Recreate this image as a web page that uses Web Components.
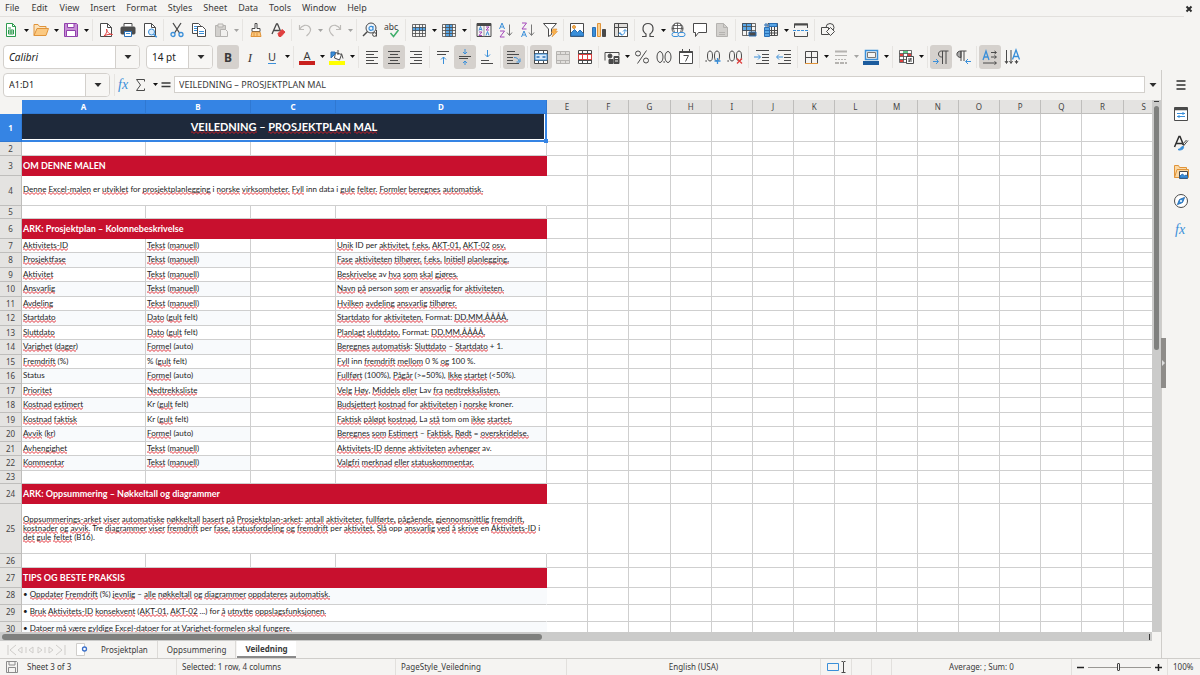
<!DOCTYPE html>
<html lang="nb">
<head>
<meta charset="utf-8">
<title>Prosjektplan – Veiledning</title>
<style>
  html, body { margin: 0; height: 100%; }
  body { background: #f5f4f2; color: #3a3a3a; font: 9px/12px "Noto Sans", sans-serif; overflow: hidden; }
</style>
</head>
<body>
<calc-window></calc-window>

<script>
const svg = (body, w = 16, h = 16) =>
  `<svg width="${w}" height="${h}" viewBox="0 0 ${w} ${h}" fill="none" stroke="#4a4a4a" aria-hidden="true">${body}</svg>`;

const gridLines = '<path d="M1.500 2.500h13v12h-13zM1.500 5.500h13M1.500 8.500h13M1.500 11.500h13M4.500 2.500v12M8.500 2.500v12M11.500 2.500v12" stroke-width=".8"/>';
const lines = (ys, x1 = 2, x2 = 14) => ys.map(y => `M${x1} ${y}h${x2 - x1}`).join('');

const ICONS = {
  newdoc: '<path d="M3.500 1.500h6l3 3v10h-9z" stroke="#2e9b4f" fill="#fff"/><path d="M5.500 8h5v4h-5zM5.500 10h5M8 8v4M5 6h3" stroke="#2e9b4f"/><path d="M9.500 1.500v3h3" stroke="#2e9b4f"/>',
  open: '<path d="M1 13.500v-11h4l1.500 2H13v2" stroke="#e0943a" fill="#fbe3bd"/><path d="M1 13.500l3-7h11.500l-2.500 7z" stroke="#e0943a" fill="#fbc981"/>',
  save: '<path d="M1.500 1.500h12l1 1v12h-13z" stroke="#9141ac" fill="#c88fd6"/><path d="M4.500 1.500h6.500v4h-6.500z" stroke="#9141ac" fill="#fff"/><path d="M3.500 8.500h9v6h-9z" stroke="#9141ac" fill="#fff"/>',
  pdf: '<path d="M2.500 1.500h7l4 4v9h-11z" fill="#fff"/><path d="M9.500 1.500v4h4"/><path d="M6 14c3-3 3-5 2.500-7 1 4 3 5 6 5.500-3-.5-6 0-8.500 1.500z" stroke="#e0403f"/>',
  print: '<path d="M4 4.500v-3h8v3" fill="#fff"/><rect x="1" y="5" width="14" height="7" rx="1" fill="#4d4d4d"/><path d="M4.500 9.500h7v5h-7z" fill="#fff" stroke="#2a6fb5"/><path d="M6 11.500h4" stroke="#3a8fd9"/>',
  preview: '<path d="M2.500 1.500h7l4 4v9h-11z" fill="#fff"/><path d="M9.500 1.500v4h4"/><circle cx="9.500" cy="10" r="3" stroke="#3a8fd9" fill="#dcecfa"/><path d="M11.700 12.200l3 3" stroke="#3a8fd9" stroke-width="1.500"/>',
  cut: '<path d="M4 1l6.500 10M12 1L5.500 11" stroke-width="1.300"/><circle cx="4" cy="12.500" r="2" stroke="#3a8fd9" stroke-width="1.300"/><circle cx="12" cy="12.500" r="2" stroke="#3a8fd9" stroke-width="1.300"/>',
  copy: '<path d="M1.500 1.500h6l2 2v8h-8z" fill="#fff"/><path d="M3 4.500h4M3 6.500h3M3 8.500h3" stroke="#3a8fd9"/><path d="M6.500 4.500h5l3 3v7h-8z" fill="#fff"/><path d="M8 9.500h5M8 11.500h5" stroke="#3a8fd9"/>',
  paste: '<path d="M2.500 3.500h10v11h-10z" stroke="#b5b3b0" fill="#d2d0cd"/><path d="M5 2h5v3H5z" stroke="#b5b3b0" fill="#e8e6e3"/><path d="M7.500 7.500h5l2 2v5h-7z" stroke="#b5b3b0" fill="#f1f0ee"/>',
  brush: '<path d="M7 1.500h2v5h3v3H4v-3h3z" fill="#fff"/><path d="M4 10h8l1 4.500H3z" stroke="#e0943a" fill="#fbc981"/><path d="M6 11v3M9 11v3" stroke="#e0943a"/>',
  clear: '<path d="M2 12L6.500 2h1L10.500 9M3.500 8.500h6" stroke-width="1.300"/><path d="M8 11.500l4-4 3 2.500-4 4.500H9z" fill="#e0403f" stroke="#e0403f"/>',
  undo: '<path d="M2.500 3v4.500H7M2.500 7.500C5 3 10 2 12.500 5s.5 6-3 9" stroke="#bdbbb8" stroke-width="1.200"/>',
  redo: '<path d="M13.500 3v4.500H9M13.500 7.500C11 3 6 2 3.500 5s-.5 6 3 9" stroke="#bdbbb8" stroke-width="1.200"/>',
  find: '<circle cx="9" cy="6" r="5" fill="#eef5fc"/><path d="M5.500 9.500L1 14" stroke-width="1.500"/><path d="M11 6.500a2 2 0 1 1-.1-.8M11 4v4.500" stroke="#3a8fd9" stroke-width="1.200"/><path d="M14.500 8v6.500"/><circle cx="12.500" cy="12.500" r="1.900"/>',
  spell: '<text x="0" y="8" font-family="Noto Sans" font-size="8.500" fill="#3a3a3a" stroke="none">abc</text><path d="M6.500 11l3 3.500 5-6.500" stroke="#3fae6a" stroke-width="1.500"/>',
  row: '<path d="M2 5h13v4H2z" fill="#58a6e6" stroke="none"/>' + gridLines,
  column: '<path d="M5 2h6v13H5z" fill="#58a6e6" stroke="none"/>' + gridLines,
  sort: '<path d="M1 1.500h14v13H1z"/><path d="M1 2h14v2H1z" fill="#4a4a4a" stroke="none"/><path d="M8 4v10.500" stroke="#999"/><path d="M3 8.500l1.500-4L6 8.500M3.300 7.500h2.400M10 13.500l1.500-4 1.500 4" stroke="#3a8fd9"/><path d="M3 10h3l-3 3.500h3M10 5h3l-3 3h3" stroke="#a347ba"/>',
  az: '<path d="M1.500 7L4 1l2.500 6M2.500 5h3" stroke="#3a8fd9"/><path d="M2 9h4.500L2 15h4.500" stroke="#a347ba"/><path d="M11.500 2.500V13M9 10.500l2.500 3 2.500-3" stroke="#777"/>',
  za: '<path d="M1.500 15L4 9l2.500 6M2.500 13h3" stroke="#3a8fd9"/><path d="M2 1h4.500L2 7h4.500" stroke="#a347ba"/><path d="M11.500 2.500V13M9 10.500l2.500 3 2.500-3" stroke="#777"/>',
  filter: '<path d="M1.500 1.500h13L9.500 7v5.500l-3 2V7z" fill="#fff"/><path d="M11 7h4l-1.500 2.500h2L10 15l1.500-4h-2z" fill="#fbb24c" stroke="#e0943a" stroke-width=".6"/>',
  image: '<path d="M1.500 1.500h13v13h-13z" fill="#fff"/><path d="M2 14v-3l3.500-3.500 3 3L11 8l3.500 3.500V14z" fill="#3a8fd9" stroke="#2a6fb5"/><circle cx="5" cy="5" r="1.500" fill="#fbb24c" stroke="#e0943a"/>',
  chart: '<path d="M1.500 5.500h3v9h-3z" fill="#3a8fd9" stroke="#2a6fb5"/><path d="M6.500 1.500h3v13h-3z" fill="#fbd08f" stroke="#e0943a"/><path d="M11.500 7.500h3v7h-3z" fill="#4a4a4a"/>',
  pivot: '<path d="M1.500 1.500h13v13h-13z" fill="#e0dedb"/><path d="M5.500 5.500h9v9h-9z" fill="#fff"/><path d="M1.500 5.500h4M5.500 1.500v4"/><path d="M7 11c0 3 5 3 5-3M10 9.500l2-2 2 2M9 13l-2-2.500-1.500 2" stroke="#3a8fd9"/>',
  omega: '<path d="M2 14.500h4V12C1.500 9 2 1.500 8 1.500S14.500 9 10 12v2.500h4" stroke-width="1.200"/>',
  link: '<circle cx="7.500" cy="6.500" r="5.500" fill="#fff"/><path d="M2 6.500h11M7.500 1v11M3 3.500h9M5 1.500c-2 3-2 6 0 9M10 1.500c2 3 2 6 0 9" stroke-width=".8"/><rect x="2" y="10.500" width="7" height="4" rx="2" stroke="#3a8fd9" fill="#f5f4f2"/><rect x="8" y="10.500" width="7" height="4" rx="2" stroke="#3a8fd9" fill="#f5f4f2"/>',
  comment: '<path d="M1.500 1.500h13v9h-8l-3 4v-4h-2z" fill="#fff"/>',
  header: '<path d="M2.500 1.500h7l4 4v9h-11z" fill="#d2d0cd" stroke="#b5b3b0"/><path d="M9.500 1.500v4h4M5 10.500h6M5 12.500h6" stroke="#b5b3b0"/>',
  printarea: '<path d="M1.500 1.500h9v7h-9z" fill="#58a6e6" stroke="#2a6fb5"/><path d="M1.500 1.500h13v12h-13zM1.500 4.500h13M1.500 8.500h13M5.500 1.500v12M10.500 1.500v12" stroke-width=".8"/><path d="M8 10h7v4H8z" fill="#4a4a4a" stroke="#2a6fb5"/>',
  freeze: '<path d="M5 1.500h9.500v12H5zM5 8.500h9.500M8.500 5v8.500M11.500 5v8.500M5 11h9.500"/><path d="M1.500 5.500h5v9h-5zM6 1.500h8v3H6z" fill="#58a6e6" stroke="#2a6fb5"/><path d="M1.500 8.500h5M1.500 11.500h5M3 1v4M1 3h4" stroke="#2a6fb5"/>',
  split: '<path d="M1.500 6V2h13v4M1.500 10v4.500h13V10"/><path d="M1 2.500h14" stroke-width="2"/><path d="M0 8.500h16" stroke="#3a8fd9" stroke-dasharray="3 1"/>',
  shapes: '<circle cx="10" cy="5.500" r="4" fill="#f5f4f2"/><path d="M1.500 5.500h7v7h-7z" fill="#f5f4f2"/><path d="M10.500 5.500l4 4-4 4-4-4z" fill="#f5f4f2"/>',
  bold: '<text x="8" y="12.500" text-anchor="middle" font-family="Noto Sans" font-weight="700" font-size="12" fill="#3a3a3a" stroke="none">B</text>',
  italic: '<text x="8" y="12.500" text-anchor="middle" font-family="Liberation Serif" font-style="italic" font-size="13" fill="#3a3a3a" stroke="none">I</text>',
  underline: '<text x="8" y="12" text-anchor="middle" font-family="Noto Sans" font-size="11" fill="#3a3a3a" stroke="none">U</text><path d="M4 14.500h8" stroke="#3a8fd9"/>',
  fontcolor: '<text x="8" y="10.500" text-anchor="middle" font-family="Noto Sans" font-size="11" fill="#3a3a3a" stroke="none">A</text><path d="M0 14h16" stroke="#c9211e" stroke-width="4"/>',
  highlight: '<path d="M0 14h16" stroke="#ff0" stroke-width="4"/><path d="M6.500 3.500l6 2-2 5.500-5-2z" fill="#fff"/><path d="M9 1v5M12.500 4.500l1.500 5"/><path d="M2 9V3h4v2z" fill="#3a8fd9" stroke="#2a6fb5"/>',
  left: `<path d="${lines([2.500, 8.500, 14.500])}${lines([5.500, 11.500], 2, 10)}"/>`,
  center: `<path d="${lines([2.500, 8.500, 14.500])}${lines([5.500, 11.500], 4, 12)}"/>`,
  right: `<path d="${lines([2.500, 8.500, 14.500])}${lines([5.500, 11.500], 6, 14)}"/>`,
  top: `<path d="${lines([2.500])}${lines([5.500], 2, 11)}"/><path d="M8.500 15V8M6 10.500L8.500 8l2.500 2.500" stroke="#3a8fd9"/>`,
  middle: `<path d="${lines([7.500])}${lines([9.500], 2, 11)}"/><path d="M8 0v5M6 3l2 2 2-2M8 16v-4M6 14l2-2 2 2" stroke="#3a8fd9"/>`,
  bottom: `<path d="${lines([14.500])}${lines([11.500], 2, 10)}"/><path d="M8.500 1v7M6 5.500L8.500 8 11 5.500" stroke="#3a8fd9"/>`,
  wrap: `<path d="${lines([2.500], 1, 9)}${lines([5.500], 1, 13)}${lines([8.500, 11.500], 1, 7)}${lines([14.500], 1, 13)}"/><path d="M8 8.500c3 0 4 1 5 3.500M14 9.500V13h-3.500" stroke="#3a8fd9"/>`,
  merge: '<path d="M1.500 1.500h13v13h-13zM1.500 4.500h13M1.500 11.500h13M5.500 1.500v3M10.500 1.500v3M5.500 11.500v3M10.500 11.500v3" fill="#fff"/><path d="M2 5h12v6H2z" fill="#d9ebfb" stroke="#3a8fd9"/><path d="M3.500 8h3M9.500 8h3" stroke="#2a6fb5" stroke-width="1.500"/>',
  mergecells: '<path d="M1.500 2.500h13v12h-13zM1.500 5.500h13M1.500 11.500h13M5.500 2.500v3M10.500 2.500v3M5.500 11.500v3M10.500 11.500v3" fill="#e0dedb" stroke="#b5b3b0"/>',
  splitcells: '<path d="M1.500 1.500h13v13h-13zM1.500 4.500h13M1.500 11.500h13M5.500 1.500v13M10.500 1.500v13" fill="#fff"/><path d="M1.500 5.500h13v5h-13zM5.500 5.500v5M10.500 5.500v5" stroke="#e0403f"/>',
  currency: '<path d="M1 11.500v-8h14v3"/><circle cx="6" cy="7" r="2" fill="#4a4a4a"/><path d="M5 10.500h4v4H5zM10 7.500h5v7h-5z" fill="#4a4a4a"/><path d="M11 9.500h3M11 12h3" stroke="#f5f4f2"/>',
  percent: '<circle cx="4" cy="4.500" r="2.500"/><circle cx="12" cy="11.500" r="2.500"/><path d="M12.500 1.500l-9 13"/>',
  decimal: '<ellipse cx="4" cy="8" rx="3" ry="5.500"/><ellipse cx="12" cy="8" rx="3" ry="5.500"/><path d="M7.500 13h1.200" stroke-width="1.500"/>',
  date: '<path d="M1.500 2.500h13v12h-13z" fill="#fff"/><path d="M1.500 3h13" stroke-width="2"/><path d="M4.500 0v3M11.500 0v3M5.500 6.500h5l-3 6"/>',
  adddec: '<ellipse cx="5" cy="7" rx="2.500" ry="5"/><ellipse cx="12" cy="7" rx="2.500" ry="5"/><path d="M.5 12h1.200" stroke-width="1.500"/><path d="M12.500 9v6M9.500 12h6" stroke="#3a8fd9" stroke-width="1.300"/>',
  deldec: '<ellipse cx="5" cy="7" rx="2.500" ry="5"/><ellipse cx="12" cy="7" rx="2.500" ry="5"/><path d="M.5 12h1.200" stroke-width="1.500"/><path d="M10 9.500l5 5M15 9.500l-5 5" stroke="#e0403f" stroke-width="1.300"/>',
  indent: `<path d="${lines([1.500, 14.500], 2, 15)}${lines([5.500, 8.500, 11.500], 8, 15)}"/><path d="M0 8h6M4 5.500L6.500 8 4 10.500" stroke="#3a8fd9"/>`,
  outdent: `<path d="${lines([1.500, 14.500], 2, 15)}${lines([5.500, 8.500, 11.500], 8, 15)}"/><path d="M7 8H1M3 5.500L.5 8 3 10.500" stroke="#3a8fd9"/>`,
  borders: '<path d="M2.500 14V2.500h12V14M8.500 2.500V14M2.500 8.500h12" /><path d="M2 14.500h13" stroke="#e0943a"/>',
  borderstyle: '<path d="M2 2.500h12" stroke="#b5b3b0" stroke-width="2"/><path d="M2 6.500h12" stroke="#b5b3b0" /><path d="M2 10.500h12" stroke="#b5b3b0" stroke-dasharray="2 1"/><path d="M2 14h12" stroke="#b5b3b0" stroke-width="2" stroke-dasharray="4 1"/>',
  bordercolor: '<path d="M2.500 1.500h12v9h-12z" fill="#f5f4f2" stroke="#3a8fd9" stroke-width="1.500"/><path d="M4.500 3.500h8v5h-8z" stroke="#777"/><path d="M0 14h16" stroke="#1c5c9e" stroke-width="4"/>',
  conditional: '<path d="M1.500 1.500h12v12h-12zM1.500 4.500h12M1.500 7.500h12M1.500 10.500h8M5.500 1.500v12M9.500 1.500v8" fill="#fff" stroke-width=".8"/><path d="M5 2h5v2H5z" fill="#5cc98a" stroke="none"/><path d="M2 5h3v2H2zM2 11h3v2H2zM10 5h3v2h-3z" fill="#e0403f" stroke="none"/><path d="M8.500 7.500h7v7h-7z" fill="#fff"/><path d="M10 10h4M10 12h4M13 9l-2 4"/>',
  ltr: '<path d="M9.500 15V2M13 15V2M15.500 2H8.500C4.500 2 4.500 8 8.500 8h1"/><path d="M0 12.500h5M3 10l2.500 2.500L3 15" stroke="#3a8fd9"/>',
  rtl: '<path d="M6 2v6.500C.5 8.500.5 2 6 2z" fill="#aaa"/><path d="M6 12V2M9 12V2M11.500 2H6"/><path d="M16 12.500h-5M13 10l-2.500 2.500L13 15" stroke="#3a8fd9"/>',
  dirh: '<path d="M1 11L4 2l3 9M2 8h4" stroke="#3a8fd9" stroke-width="1.300"/><path d="M9 3.500h5M12.500 2l2 1.500-2 1.500M9 8h5M12.500 6.500l2 1.500-2 1.500M1 14h13M12.500 12.500l2 1.500-2 1.500"/>',
  dirv: '<path d="M8.500 10.500L12 1l3.500 9.500M9.500 7.500h5" stroke="#3a8fd9" stroke-width="1.300"/><path d="M2.500 1v13M1 12l1.500 2.500L4 12M7 1v13M5.500 12L7 14.500 8.500 12M12.500 11v3M11 12l1.500 2.500L14 12"/>',
  fx: '<text x="2" y="12" font-family="Liberation Serif" font-style="italic" font-size="14" fill="#3a8fd9" stroke="none">fx</text>',
  sigma: '<path d="M12.500 4.500V2.500H4.500L8.500 8l-4 5.500h8V11.500"/>',
  equals: '<path d="M3.500 6h9M3.500 9.500h9" stroke="#3a3a3a" stroke-width="1.300"/>',
  menu: '<path d="M3.500 4h9M3.500 8h9M3.500 12h9" stroke="#2e2e2e" stroke-width="1.300"/>',
  properties: '<path d="M1.500 1.500h13v13h-13z" fill="#fff"/><path d="M1.500 3h13" stroke-width="2.500"/><path d="M4 7.500h8M4 10.500h8M10 6v3M6 9v3" stroke="#3a8fd9"/>',
  styles: '<path d="M1.500 12L6 1.500h1L10.500 10M3 8.500h6" stroke="#2e2e2e" stroke-width="1.500"/><path d="M15 5.500l-5 6M13.500 5l-4.500 5" /><path d="M6 15c3 0 5-1 4.500-3.500C8 11 8 14 5 14.500z" fill="#3a8fd9" stroke="#3a8fd9"/>',
  gallery: '<path d="M1.500 13.500v-12h4l1 2h7v2" stroke="#e0943a" fill="#fbd9a5"/><path d="M1.500 13.500l2.500-8h11.500v8z" stroke="#e0943a" fill="#fbd9a5"/><path d="M6.500 7.500h8v7h-8z" fill="#fff"/><path d="M7 14v-2l2.500-2 2 2 1.500-1 1.500 1v2z" fill="#3a8fd9" stroke="#2a6fb5"/>',
  navigator: '<circle cx="8" cy="8" r="6.500" fill="#fff"/><path d="M11.500 4.500L9.500 9.500l-5 2 2-5z" fill="#3a8fd9" stroke="#2a6fb5"/><circle cx="8" cy="8" r="1" fill="#fff" stroke="none"/>',
  disk: '<path d="M2.500 2.500h10l1 1v10h-11zM5 2.500v3.500h6V2.500M4.500 13.500v-5h7v5" stroke="#8c8c8c"/>',
  addsheet: '<path d="M1.500 1.500h8v12h-8z" fill="#fff" stroke="#d0cecb"/><circle cx="9.500" cy="7" r="2" stroke="#3a6fc9" fill="#fff" stroke-width="1.300"/>',
  close: '<path d="M5.500 5.500l5 5M10.500 5.500l-5 5" stroke="#2e2e2e" stroke-width="2"/>',
  down: '<path d="M4.500 6h7L8 10z" fill="#2e2e2e" stroke="none"/>'
};
const icon = name => svg(ICONS[name]);

const BASE = `
  *, ::before, ::after { box-sizing: border-box; }
  :host { display: block; }
  :host([hidden]) { display: none; }
  button, input, select { font: inherit; color: inherit; margin: 0; padding: 0; border: 0; background: none; border-radius: 0; outline: 0; }
  svg { display: block; flex: none; overflow: visible; }
`;

class Base extends HTMLElement {
  connectedCallback() {
    if (this.shadowRoot) return;
    const t = document.createElement('template');
    t.innerHTML = `<style>${BASE}${this.css()}</style>${this.html()}`;
    this.attachShadow({ mode: 'open' }).append(t.content.cloneNode(true));
  }
  css() { return ''; }
  html() { return '<slot></slot>'; }
}

customElements.define('calc-menubar', class extends Base {
  css() { return `
    :host { display: flex; height: 17px; }
    nav { display: flex; flex: 1; border-bottom: 1px solid #e2e0dd; }
    nav button { padding: 0 5px 0 6px; line-height: 16px; }
    nav button:nth-child(-n + 2) { padding-right: 6px; }
    nav button:first-child { padding-left: 5px; }
    .close { width: 16px; padding-right: 6px; }
    .close svg { margin-left: -3px; }`; }
  html() {
    return `<nav aria-label="Menu">${['File', 'Edit', 'View', 'Insert', 'Format', 'Styles', 'Sheet', 'Data', 'Tools', 'Window', 'Help']
      .map(m => `<button>${m}</button>`).join('')}</nav><button class="close" aria-label="Close">${icon('close')}</button>`;
  }
});

/* One toolbar button; "menu" adds a drop-down arrow behind it. */
customElements.define('tool-button', class extends Base {
  css() { return `
    :host { display: flex; flex: none; }
    .main { width: 22px; height: 24px; display: grid; place-items: center; border-radius: 3px; }
    :host([pressed]) .main { background: #d5d1cd; }
    .drop { width: 8px; display: grid; place-items: center; }
    :host([disabled]) .drop { opacity: .35; }`; }
  html() {
    const name = this.getAttribute('icon'), off = this.hasAttribute('disabled') ? ' disabled' : '';
    const pressed = this.hasAttribute('pressed') ? ' aria-pressed="true"' : '';
    return `<button class="main" aria-label="${name}"${pressed}${off}>${icon(name)}</button>` +
      (this.hasAttribute('menu') ? `<button class="drop" aria-label="${name} options"${off}>${svg('<path d="M0 0h5L2.500 3z" fill="#111" stroke="none"/>', 5, 3)}</button>` : '');
  }
});

customElements.define('tool-separator', class extends Base {
  css() { return ':host { flex: none; width: 1px; height: 22px; margin: 0 2px; background: #e6e4e1; }'; }
  html() { return ''; }
});

/* Expands "name", "name>" (menu), "name!" (pressed), "name~" (disabled) and "|". */
const tools = spec => spec.split(' ').map(s => {
  if (s === '|') return '<tool-separator></tool-separator>';
  const attrs = (s.includes('>') ? ' menu' : '') + (s.includes('!') ? ' pressed' : '') + (s.includes('~') ? ' disabled' : '');
  return `<tool-button icon="${s.replace(/[>!~]/g, '')}"${attrs}></tool-button>`;
}).join('');

customElements.define('tool-bar', class extends Base {
  css() { return ':host { display: flex; align-items: center; }'; }
});

/* Drop-down with a separate arrow compartment. */
customElements.define('drop-box', class extends Base {
  css() { return `
    :host { display: grid; flex: none; height: 24px; grid-template-columns: 1fr 24px; border: 1px solid #d3d0cc; border-radius: 4px; background: #fff; overflow: hidden; }
    select, input { grid-area: 1 / 1 / 2 / 3; width: 100%; appearance: none; padding-left: 5px; color: #222; font-size: var(--size, 9px); }
    span { grid-area: 1 / 2; display: grid; place-items: center; background: #f7f6f4; border-left: 1px solid #d3d0cc; pointer-events: none; }`; }
  html() {
    const v = this.getAttribute('value'), l = this.getAttribute('label');
    return (this.hasAttribute('editable') ? `<input aria-label="${l}" value="${v}">` : `<select aria-label="${l}"><option>${v}</option></select>`) +
      `<span>${icon('down')}</span>`;
  }
});

customElements.define('formula-bar', class extends Base {
  css() { return `
    :host { display: flex; align-items: center; height: 30px; padding: 0 1px 1px 3px; }
    drop-box { width: 107px; margin-right: 4px; }
    tool-separator { margin: 0; height: 22px; }
    tool-button { margin: 0 -2px; }
    tool-button[icon="sigma"] { margin-left: -4px; }
    input { flex: 1; min-width: 0; height: 17px; margin-left: -1px; padding: 0 4px; border: 1px solid #d3d0cc; background: #fff; }
    .expand { width: 15px; display: grid; place-items: center; }`; }
  html() {
    return `<drop-box editable label="Name Box" value="A1:D1"></drop-box><tool-separator></tool-separator>
      <tool-button icon="fx"></tool-button><tool-button icon="sigma" menu></tool-button><tool-button icon="equals"></tool-button>
      <input aria-label="Input line" value="VEILEDNING – PROSJEKTPLAN MAL">
      <button class="expand" aria-label="Expand Formula Bar">${icon('down')}</button>`;
  }
});

/* Sheet contents. Square brackets enclose words flagged by the spelling checker. */
const FIELDS = [
  ['[Aktivitets-ID]', '[Tekst] ([manuell])', '[Unik] ID per [aktivitet,] [f.eks.] [AKT-01,] [AKT-02] [osv.]'],
  ['[Prosjektfase]', '[Tekst] ([manuell])', '[Fase] [aktiviteten] [tilhører,] [f.eks.] [Initiell] [planlegging.]'],
  ['[Aktivitet]', '[Tekst] ([manuell])', '[Beskrivelse] av [hva] [som] [skal] [gjøres.]'],
  ['[Ansvarlig]', '[Tekst] ([manuell])', '[Navn] [på] person [som] er [ansvarlig] for [aktiviteten.]'],
  ['[Avdeling]', '[Tekst] ([manuell])', '[Hvilken] [avdeling] [ansvarlig] [tilhører.]'],
  ['[Startdato]', '[Dato] ([gult] felt)', '[Startdato] for [aktiviteten.] Format: [DD.MM.ÅÅÅÅ.]'],
  ['[Sluttdato]', '[Dato] ([gult] felt)', '[Planlagt] [sluttdato.] Format: [DD.MM.ÅÅÅÅ.]'],
  ['[Varighet] ([dager])', '[Formel] (auto)', '[Beregnes] [automatisk]: [Sluttdato] – [Startdato] + 1.'],
  ['[Fremdrift] (%)', '% ([gult] felt)', '[Fyll] inn [fremdrift] [mellom] 0 % [og] 100 %.'],
  ['Status', '[Formel] (auto)', '[Fullført] (100%), [Pågår] (&gt;=50%), [Ikke] [startet] (&lt;50%).'],
  ['[Prioritet]', '[Nedtrekksliste]', '[Velg] [Høy], [Middels] [eller] Lav [fra] [nedtrekkslisten.]'],
  ['[Kostnad] [estimert]', 'Kr ([gult] felt)', '[Budsjettert] [kostnad] for [aktiviteten] i [norske] kroner.'],
  ['[Kostnad] [faktisk]', 'Kr ([gult] felt)', '[Faktisk] [påløpt] [kostnad.] La [stå] tom om [ikke] [startet.]'],
  ['[Avvik] ([kr])', '[Formel] (auto)', '[Beregnes] [som] [Estimert] – [Faktisk.] [Rødt] = [overskridelse.]'],
  ['[Avhengighet]', '[Tekst] ([manuell])', '[Aktivitets-ID] [denne] [aktiviteten] [avhenger] av.'],
  ['[Kommentar]', '[Tekst] ([manuell])', '[Valgfri] [merknad] [eller] [statuskommentar.]']
];
const ROWS = [
  ['title', '[VEILEDNING] – [PROSJEKTPLAN] [MAL]'],
  ['blank'],
  ['section', 'OM DENNE MALEN'],
  ['note', '[Denne] [Excel-malen] er [utviklet] for [prosjektplanlegging] i [norske] [virksomheter.] [Fyll] inn data i [gule] [felter.] [Formler] [beregnes] [automatisk.]'],
  ['blank short'],
  ['section', 'ARK: Prosjektplan – Kolonnebeskrivelse'],
  ...FIELDS.map((f, i) => [i % 2 ? 'field tint' : 'field', ...f]),
  ['blank short'],
  ['section', 'ARK: Oppsummering – Nøkkeltall og diagrammer'],
  ['para', '[Oppsummerings-arket] [viser] [automatiske] [nøkkeltall] [basert] [på] [Prosjektplan-arket]: [antall] [aktiviteter,] [fullførte,] [pågående,] [gjennomsnittlig] [fremdrift,]<br>[kostnader] [og] [avvik.] Tre [diagrammer] [viser] [fremdrift] per [fase,] [statusfordeling] [og] [fremdrift] per [aktivitet.] [Slå] opp [ansvarlig] [ved] [å] [skrive] en [Aktivitets-ID] i<br>[det] [gule] [feltet] (B16).'],
  ['blank'],
  ['section', 'TIPS OG BESTE PRAKSIS'],
  ['tip tint', '• [Oppdater] [Fremdrift] (%) [jevnlig] – [alle] [nøkkeltall] [og] [diagrammer] [oppdateres] [automatisk.]'],
  ['tip', '• [Bruk] [Aktivitets-ID] [konsekvent] ([AKT-01], [AKT-02] ...) for [å] [utnytte] [oppslagsfunksjonen.]'],
  ['tip tint', '• [Datoer] [må] [være] [gyldige] [Excel-datoer] for at [Varighet-formelen] [skal] [fungere.]']
];
const mark = s => s.replace(/\[([^\]]+)\]/g, '<u>$1</u>');
const WAVE = `url("data:image/svg+xml,%3Csvg xmlns='http://www.w3.org/2000/svg' width='4' height='3'%3E%3Cpath d='M-1 2.500L1 .5l2 2 2-2' fill='none' stroke='%23e01b24' stroke-width='.9'/%3E%3C/svg%3E")`;

customElements.define('sheet-grid', class extends Base {
  css() { return `
    :host { overflow: hidden; background: #fff; min-width: 0; min-height: 0; }
    table { width: calc(100% + 13px); table-layout: fixed; border-collapse: separate; border-spacing: 0; }
    col.rows { width: 22px; } col.a { width: 124px; } col.b { width: 105px; } col.c { width: 85px; } col.d { width: 211px; }
    tr { height: 14px; }
    th, td { padding: 0; white-space: nowrap; border: solid #cfcfcf; border-width: 0 1px 1px 0; }
    th { font-weight: 400; font-size: 8px; line-height: 12px; background: #e4e3e1; border-color: #bfbebc; color: #444; }
    th.on { background: #3584e4; color: #fff; font-weight: 700; border-color: #2f78d2; }
    thead th:first-child { background: #f5f4f2; border-color: #f5f4f2; }
    td { padding-left: 1px; font: 8px/9px Lato, sans-serif; color: #1c1c1c; }
    td[colspan] { border-right-color: transparent; }
    u { text-decoration: none; padding-bottom: 1px; background: ${WAVE} left bottom / 4px 3px repeat-x; }
    .title { height: 28px; } .short { height: 13px; } .section { height: 20px; } .note { height: 30px; }
    .field { height: 14px; } .field.tint { height: 15px; } .para { height: 50px; } .tip { height: 17px; }
    .field td, .section td { padding-bottom: 1px; }
    .note td, .tip td { padding-bottom: 3px; }
    .tip th { padding-bottom: 2px; }
    .title td[colspan] { position: relative; text-align: center; font-size: 11px; line-height: 16px; font-weight: 700; color: #fff; background: #1e293b; border: solid #3584e4; border-width: 0 2px 2px 0; box-shadow: inset -1px -1px #fff; }
    .title td[colspan]::after { content: ""; position: absolute; right: -3px; bottom: -3px; width: 4px; height: 4px; background: #3584e4; }
    .section td[colspan] { color: #fff; background: #c8102e; border-color: #c8102e; font-size: 9px; font-weight: 700; }
    .tint td.fill { background: #f8fafc; }`; }
  html() {
    const letters = [...'ABCDEFGHIJKLMNOPQRS'];
    const empty = n => '<td></td>'.repeat(n);
    const body = ROWS.map(([kind, ...cells], i) => {
      const content = cells.length === 3
        ? `<td class="fill">${mark(cells[0])}</td><td class="fill">${mark(cells[1])}</td><td></td><td class="fill">${mark(cells[2])}</td>`
        : cells.length === 1 ? `<td class="fill" colspan="4">${mark(cells[0])}</td>` : empty(4);
      return `<tr class="${kind}"><th scope="row"${i ? '' : ' class="on"'}>${i + 1}</th>${content}${empty(15)}</tr>`;
    }).join('');
    return `<table><colgroup><col class="rows"><col class="a"><col class="b"><col class="c"><col class="d"><col span="15"></colgroup>
      <thead><tr><th></th>${letters.map((l, i) => `<th scope="col"${i < 4 ? ' class="on"' : ''}>${l}</th>`).join('')}</tr></thead>
      <tbody>${body}</tbody></table>`;
  }
});

customElements.define('scroll-bar', class extends Base {
  css() { return `
    :host { display: flex; background: #cbcbca; }
    :host([vertical]) { flex-direction: column; padding: 1px 2px; }
    :host([horizontal]) { height: 9px; margin-right: 9px; padding: 2px 2px 1px; justify-content: space-between; }
    .thumb { background: #7f807e; border-radius: 3px; }
    :host([vertical]) .thumb { height: 46%; width: 5px; margin-top: 4px; }
    :host([horizontal]) .thumb { width: 47%; }
    .split { background: #3a3a3a; }
    :host([vertical]) .split { height: 1px; }
    :host([horizontal]) .split { width: 1px; }`; }
  html() {
    const split = '<div class="split"></div>', thumb = '<div class="thumb"></div>';
    return this.hasAttribute('vertical') ? split + thumb : thumb + split;
  }
});

customElements.define('sheet-tabs', class extends Base {
  css() { return `
    :host { display: flex; height: 17px; font-size: 8px; }
    .nav { width: 73px; display: grid; place-items: center; }
    .add { width: 19px; display: grid; place-items: center; }
    .tab { padding: 0 9px; border-right: 1px solid #dcdad7; line-height: 16px; }
    .tab[aria-selected="true"] { margin-left: 1px; padding: 0 8px; background: #fff; font-weight: 700; border-right: 0; border-bottom: 2px solid #8a8a8a; }`; }
  html() {
    const nav = svg('<path d="M1 2v10M9 2L3 7l6 5M15 4l-4 3 4 3zM19 4v6M26 4l-4 3 4 3zM31 4l4 3-4 3zM38 4v6M42 4l4 3-4 3zM49 2l6 5-6 5M58 2v10" stroke="#cfcdca"/>', 60, 14);
    return `<button class="nav" aria-label="Scroll sheets">${nav}</button><button class="add" aria-label="Add sheet">${icon('addsheet')}</button>
      <button class="tab" role="tab">Prosjektplan</button><button class="tab" role="tab">Oppsummering</button><button class="tab" role="tab" aria-selected="true">Veiledning</button>`;
  }
});

customElements.define('side-bar', class extends Base {
  css() { return `
    :host { position: relative; display: flex; flex-direction: column; align-items: center; gap: 13px; padding-top: 7px; border-left: 1px solid #cfcdca; }
    button { display: block; }
    .handle { position: absolute; left: -1px; top: 268px; width: 5px; height: 50px; background: #8e8c89; display: grid; place-items: center; }`; }
  html() {
    return ['menu', 'properties', 'styles', 'gallery', 'navigator', 'fx'].map(n => `<button aria-label="${n}">${icon(n)}</button>`).join('') +
      `<button class="handle" aria-label="Hide sidebar">${svg('<path d="M1 0l3 3-3 3z" fill="#ddd" stroke="none"/>', 5, 6)}</button>`;
  }
});

customElements.define('status-bar', class extends Base {
  css() { return `
    :host { display: flex; align-items: center; height: 17px; border-top: 1px solid #cfcdca; font-size: 8px; line-height: 16px; }
    div { display: flex; align-items: center; height: 16px; white-space: nowrap; }
    div + div { border-left: 1px solid #e2e0dd; padding-left: 5px; }
    .sheet { width: 176px; padding-left: 4px; gap: 7px; }
    .sel { width: 219px; } .style { width: 171px; }
    div.lang { flex: 1; justify-content: center; padding-left: 0; }
    .mode { width: 31px; } .small { width: 20px; }
    div.sum { width: 180px; justify-content: center; padding-left: 0; }
    .zoom { width: 96px; gap: 3px; padding-right: 4px; }
    .level { width: 33px; }
    input { appearance: none; flex: 1; min-width: 0; height: 12px; background: linear-gradient(#9a9894, #9a9894) center / 100% 1px no-repeat; }
    input::-webkit-slider-thumb { appearance: none; width: 3px; height: 8px; background: #f5f4f2; border: 1px solid #444; border-radius: 1px; }`; }
  html() {
    return `<div class="sheet">${icon('disk')}<span>Sheet 3 of 3</span></div><div class="sel">Selected: 1 row, 4 columns</div>
      <div class="style">PageStyle_Veiledning</div><div class="lang">English (USA)</div>
      <div class="mode">${svg('<path d="M1.500 4.500h11v7h-11z" stroke="#3a8fd9"/><path d="M17.500 3v10M15.500 2.500h1.500l.5.500.5-.5h1.500M15.500 13.500h4"/>', 20, 16)}</div>
      <div class="small"></div><div class="small"></div><div class="sum">Average: ; Sum: 0</div>
      <div class="zoom"><button aria-label="Zoom out">${svg('<path d="M0 4.500h7" stroke="#222" stroke-width="1.500"/>', 8, 9)}</button>
      <input type="range" aria-label="Zoom" value="48"><button aria-label="Zoom in">${svg('<path d="M1 4.500h7M4.500 1v7" stroke="#222" stroke-width="1.500"/>', 9, 9)}</button></div>
      <div class="level">100%</div>`;
  }
});

customElements.define('calc-window', class extends Base {
  css() { return `
    :host { display: flex; flex-direction: column; height: 100vh; }
    .standard { height: 26px; }
    .format { height: 27px; }
    .font { width: 137px; margin: 0 6px 0 3px; font-style: italic; }
    .size { width: 67px; margin-right: 4px; }
    .font, .size { --size: 10px; }
    main { flex: 1; min-height: 0; display: grid; grid-template-columns: minmax(0, 1fr) 39px; }
    .doc { display: flex; flex-direction: column; min-height: 0; }
    .view { flex: 1; min-height: 0; display: grid; grid-template-columns: minmax(0, 1fr) 9px; grid-template-rows: minmax(0, 1fr); }`; }
  html() {
    return `<calc-menubar></calc-menubar>
      <tool-bar class="standard">${tools('newdoc> open> save> | pdf print preview | cut copy paste>~ | brush clear | undo>~ redo>~ | find spell | row> column> | sort az za filter | image chart pivot | omega> link comment header~ | printarea freeze> split | shapes')}</tool-bar>
      <tool-bar class="format"><drop-box class="font" label="Font Name" value="Calibri"></drop-box><drop-box class="size" label="Font Size" value="14 pt"></drop-box>${tools('bold! italic underline> | fontcolor> highlight> | left center! right | top middle! bottom | wrap! | merge! mergecells~ splitcells | currency> percent decimal date | adddec deldec | indent outdent | borders> borderstyle>~ bordercolor> | conditional> | ltr! rtl | dirh! dirv')}</tool-bar>
      <main><div class="doc"><formula-bar></formula-bar>
        <div class="view"><sheet-grid></sheet-grid><scroll-bar vertical></scroll-bar></div>
        <scroll-bar horizontal></scroll-bar><sheet-tabs></sheet-tabs></div>
        <side-bar></side-bar></main>
      <status-bar></status-bar>`;
  }
});
</script>
</body>
</html>
